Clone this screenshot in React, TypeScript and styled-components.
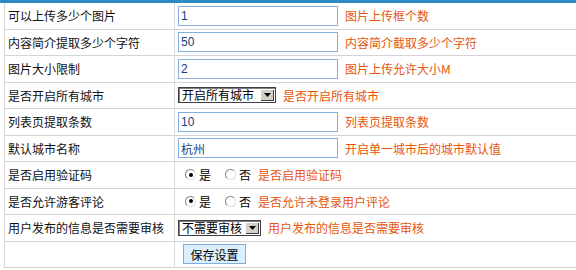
import React, { useState } from 'react';
import styled, { createGlobalStyle } from 'styled-components';

const GlobalStyle = createGlobalStyle`
    body {
        margin: 0;
        background: #fff;
        font-family: "Noto Sans CJK SC", "Liberation Sans", sans-serif;
        font-size: 12px;
        color: #111;
    }
`;

type Row =
    | { kind: 'input'; label: string; value: string; hint: string }
    | { kind: 'select'; label: string; value: string; width: number; hint: string }
    | { kind: 'radio'; label: string; hint: string };

const rows: Row[] = [
    { kind: 'input', label: '可以上传多少个图片', value: '1', hint: '图片上传框个数' },
    { kind: 'input', label: '内容简介提取多少个字符', value: '50', hint: '内容简介截取多少个字符' },
    { kind: 'input', label: '图片大小限制', value: '2', hint: '图片上传允许大小M' },
    { kind: 'select', label: '是否开启所有城市', value: '开启所有城市', width: 98, hint: '是否开启所有城市' },
    { kind: 'input', label: '列表页提取条数', value: '10', hint: '列表页提取条数' },
    { kind: 'input', label: '默认城市名称', value: '杭州', hint: '开启单一城市后的城市默认值' },
    { kind: 'radio', label: '是否启用验证码', hint: '是否启用验证码' },
    { kind: 'radio', label: '是否允许游客评论', hint: '是否允许未登录用户评论' },
    { kind: 'select', label: '用户发布的信息是否需要审核', value: '不需要审核', width: 83, hint: '用户发布的信息是否需要审核' },
];

const App: React.FC = () => {
    const [values, setValues] = useState<Record<number, string>>({});

    return (
        <>
            <GlobalStyle />
            <TopBar />
            <SettingsTable>
                {rows.map((row, i) => (
                    <TableRow key={i}>
                        <LabelCell>{row.label}</LabelCell>
                        <ValueCell>
                            {row.kind === 'input' && (
                                <TextInput
                                    value={values[i] ?? row.value}
                                    onChange={(e) => setValues({ ...values, [i]: e.target.value })}
                                />
                            )}
                            {row.kind === 'select' && (
                                <SelectBox $width={row.width}>
                                    <SelectText>{row.value}</SelectText>
                                    <ArrowButton>
                                        <svg width="7" height="4" viewBox="0 0 7 4">
                                            <path d="M0 0h7L3.5 4z" fill="#000" />
                                        </svg>
                                    </ArrowButton>
                                </SelectBox>
                            )}
                            {row.kind === 'radio' && (
                                <RadioGroup>
                                    <RadioItem>
                                        <Radio $checked />
                                        <span>是</span>
                                    </RadioItem>
                                    <RadioItem>
                                        <Radio />
                                        <span>否</span>
                                    </RadioItem>
                                </RadioGroup>
                            )}
                            <Hint $kind={row.kind}>{row.hint}</Hint>
                        </ValueCell>
                    </TableRow>
                ))}
                <TableRow>
                    <LabelCell />
                    <ValueCell>
                        <SaveButton type="button">保存设置</SaveButton>
                    </ValueCell>
                </TableRow>
            </SettingsTable>
        </>
    );
};

const TopBar = styled.div`
    height: 3px;
    background: #2d8bc3;
`;

const SettingsTable = styled.div`
    margin-left: 4px;
    border-left: 1px solid #d8d8d8;
`;

const TableRow = styled.div`
    display: grid;
    grid-template-columns: 170px 1fr;
    height: 26.5px;
    box-sizing: border-box;
    border-bottom: 1px solid #d4d4d4;
`;

const LabelCell = styled.div`
    display: flex;
    align-items: center;
    padding-left: 3px;
    border-right: 1px solid #d8d8d8;
    white-space: nowrap;
    color: #111;
`;

const ValueCell = styled.div`
    display: flex;
    align-items: center;
    padding-left: 3px;
    white-space: nowrap;
`;

const TextInput = styled.input`
    width: 160px;
    height: 20px;
    box-sizing: border-box;
    border: 1px solid #86aee0;
    padding: 0 2px;
    margin: 0;
    font-family: "Liberation Sans", "Noto Sans CJK SC", sans-serif;
    font-size: 12px;
    color: #10407e;
    outline: none;
`;

const SelectBox = styled.div<{ $width: number }>`
    width: ${({ $width }) => $width}px;
    height: 16px;
    box-sizing: border-box;
    display: flex;
    align-items: center;
    border: 1px solid #404040;
    box-shadow: inset 1px 1px 0 #808080;
    background: #fff;
`;

const SelectText = styled.span`
    flex: 1;
    padding-left: 3px;
    font-size: 12px;
    line-height: 14px;
    color: #000;
`;

const ArrowButton = styled.span`
    width: 14px;
    height: 12px;
    margin-right: 1px;
    display: flex;
    align-items: center;
    justify-content: center;
    background: #d4d0c8;
    box-shadow: inset 1px 1px 0 #fff, inset -1px -1px 0 #404040;
`;

const RadioGroup = styled.div`
    display: flex;
    align-items: center;
    gap: 14px;
    padding-left: 7px;
`;

const RadioItem = styled.label`
    display: flex;
    align-items: center;
    gap: 3px;
    color: #000;
`;

const Radio = styled.span<{ $checked?: boolean }>`
    position: relative;
    width: 11px;
    height: 11px;
    box-sizing: border-box;
    border-radius: 50%;
    border: 1px solid;
    border-color: #808080 #e0e0e0 #e0e0e0 #808080;
    background: #fff;

    &::after {
        content: '';
        display: ${({ $checked }) => ($checked ? 'block' : 'none')};
        position: absolute;
        left: 2.5px;
        top: 2.5px;
        width: 4px;
        height: 4px;
        border-radius: 50%;
        background: #000;
    }
`;

const Hint = styled.span<{ $kind: string }>`
    margin-left: ${({ $kind }) => ($kind === 'radio' ? 7 : 7)}px;
    color: #e8560a;
    font-size: 12px;
`;

const SaveButton = styled.button`
    margin-left: 5px;
    width: 63px;
    height: 20px;
    padding: 0;
    border: 1px solid #7fb0dc;
    background: #dcefff;
    font-family: "Noto Sans CJK SC", sans-serif;
    font-size: 12px;
    color: #000;
    cursor: pointer;
`;

export default App;
